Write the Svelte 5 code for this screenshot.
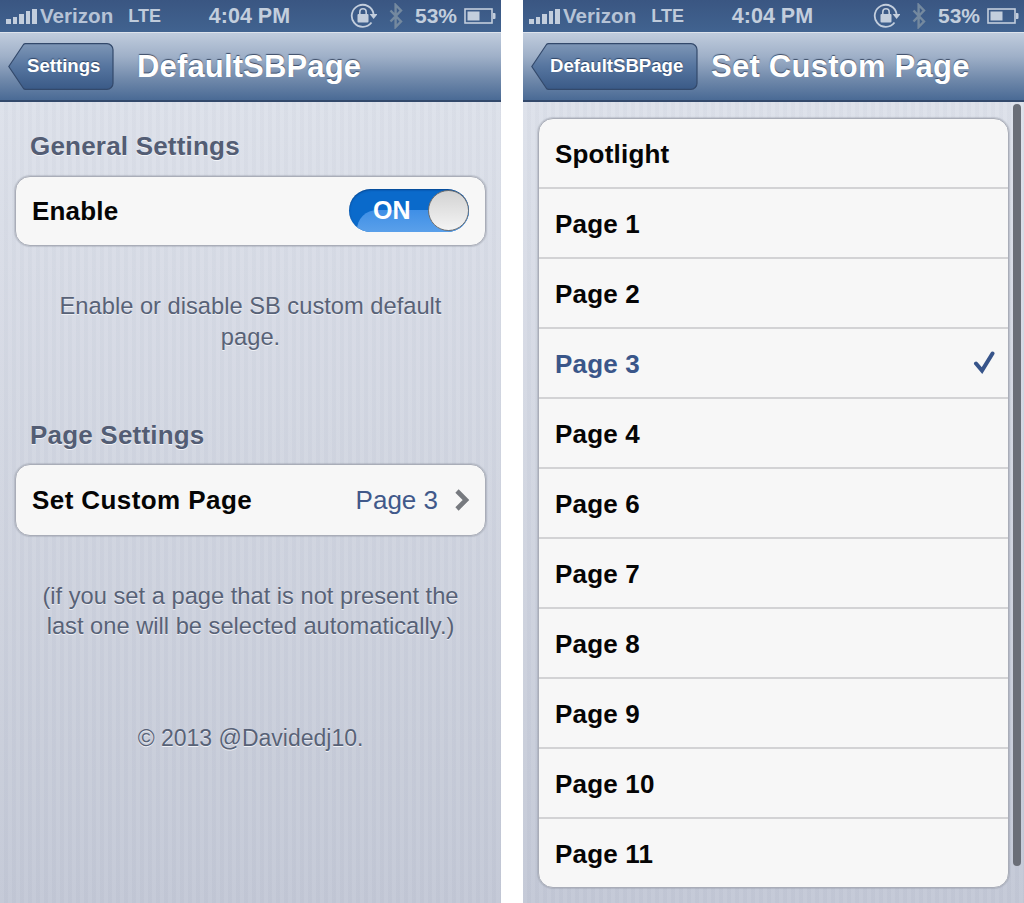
<script lang="ts">
	const pages = ['Spotlight', 'Page 1', 'Page 2', 'Page 3', 'Page 4', 'Page 6', 'Page 7', 'Page 8', 'Page 9', 'Page 10', 'Page 11'];
	const selected = 'Page 3';
	const bars = [5, 7, 10, 13, 15];
</script>

{#snippet statusBar()}
	<div class="status">
		<div class="status-left">
			<span class="signal">
				{#each bars as h}
					<i style="height:{h}px"></i>
				{/each}
			</span>
			<span class="carrier">Verizon</span>
			<span class="lte">LTE</span>
		</div>
		<div class="time">4:04 PM</div>
		<div class="status-right">
			<svg class="lock" width="27" height="26" viewBox="0 0 27 26">
				<path d="M21.5 19.5A11 11 0 1 1 23.6 11" fill="none" stroke="#c3cedd" stroke-width="1.8" />
				<path d="M19.6 11h8l-4 5z" fill="#c3cedd" />
				<rect x="7.5" y="11" width="11" height="8.5" rx="1" fill="#c3cedd" />
				<path d="M9.8 11V9a3.2 3.2 0 0 1 6.4 0v2" fill="none" stroke="#c3cedd" stroke-width="1.6" />
			</svg>
			<svg class="bt" width="14" height="26" viewBox="0 0 14 26">
				<path d="M1.5 7.5l10.5 11-5.4 5.5V2l5.4 5.5L1.5 18.5" fill="none" stroke="#74899f" stroke-width="2.4" />
			</svg>
			<span class="pct">53%</span>
			<svg class="battery" width="32" height="16" viewBox="0 0 32 16">
				<rect x="1" y="1" width="27" height="14" fill="none" stroke="#c3cedd" stroke-width="1.6" />
				<rect x="3.5" y="3.5" width="12" height="9" fill="#c3cedd" />
				<path d="M29 5h1.5a1 1 0 0 1 1 1v4a1 1 0 0 1-1 1H29z" fill="#c3cedd" />
			</svg>
		</div>
	</div>
{/snippet}

{#snippet backButton(label: string, w: number)}
	<div class="back" style="width:{w}px">
		<svg width={w} height="47" viewBox="0 0 {w} 47">
			<defs>
				<linearGradient id="back-fill-{w}" x1="0" y1="0" x2="0" y2="1">
					<stop offset="0" stop-color="#7e96b6" />
					<stop offset="0.5" stop-color="#56759f" />
					<stop offset="1" stop-color="#3a5a87" />
				</linearGradient>
			</defs>
			<path
				d="M0.8 23.5L15.5 1.5Q16.2 0.7 17.5 0.7H{w - 7}a6 6 0 0 1 6 6V40.3a6 6 0 0 1-6 6H17.5Q16.2 46.3 15.5 45.5Z"
				fill="url(#back-fill-{w})"
				stroke="#33496b"
				stroke-width="1.2"
			/>
		</svg>
		<span>{label}</span>
	</div>
{/snippet}

<div class="phones">
	<section class="screen">
		{@render statusBar()}
		<header class="nav">
			{@render backButton('Settings', 106)}
			<h1>DefaultSBPage</h1>
		</header>
		<main class="content settings">
			<h2>General Settings</h2>
			<div class="group">
				<div class="cell">
					<span class="label">Enable</span>
					<div class="switch">
						<span class="on">ON</span>
						<span class="knob"></span>
					</div>
				</div>
			</div>
			<p class="note first">Enable or disable SB custom default page.</p>
			<h2 class="page-head">Page Settings</h2>
			<div class="group">
				<div class="cell tall">
					<span class="label">Set Custom Page</span>
					<span class="value">Page 3</span>
					<svg class="chev" width="16" height="22" viewBox="0 0 16 22">
						<path d="M3 2l9 9-9 9" fill="none" stroke="#777a7f" stroke-width="4.6" />
					</svg>
				</div>
			</div>
			<p class="note second">(if you set a page that is not present the last one will be selected automatically.)</p>
			<p class="note copy">© 2013 @Davidedj10.</p>
		</main>
	</section>

	<section class="screen">
		{@render statusBar()}
		<header class="nav">
			{@render backButton('DefaultSBPage', 167)}
			<h1 class="title-right">Set Custom Page</h1>
		</header>
		<main class="content list">
			<div class="group">
				{#each pages as page}
					<div class="cell row" class:selected={page === selected}>
						<span class="label">{page}</span>
						{#if page === selected}
							<svg class="check" width="22" height="24" viewBox="0 0 22 24">
								<path d="M3 12.5l6 7L19.5 2.5" fill="none" stroke="#37548a" stroke-width="4" stroke-linecap="round" />
							</svg>
						{/if}
					</div>
				{/each}
			</div>
			<div class="scrollbar"></div>
		</main>
	</section>
</div>

<style>
	:global(body) {
		background: #fff;
	}

	.phones {
		display: flex;
		gap: 22px;
		width: 1024px;
		height: 903px;
		overflow: hidden;
		font-family: 'Liberation Sans', Arial, sans-serif;
	}

	.screen {
		display: flex;
		flex-direction: column;
		width: 501px;
		height: 903px;
	}

	.status {
		display: grid;
		grid-template-columns: 1fr auto 1fr;
		align-items: center;
		height: 32px;
		padding: 0 5px 0 6px;
		box-sizing: border-box;
		background: linear-gradient(#3a5682, #416390);
		color: #bfcbdb;
		font-size: 21.5px;
		font-weight: bold;
	}

	.status-left {
		display: flex;
		align-items: center;
	}

	.signal {
		display: flex;
		align-items: flex-end;
		gap: 2px;
		width: 31px;
		height: 15px;
		margin-top: 1px;
	}

	.signal i {
		display: block;
		width: 4.6px;
		background: #c3cedd;
	}

	.carrier {
		margin-left: 3px;
		font-size: 20.6px;
		color: #b6c3d6;
	}

	.lte {
		margin-left: 15px;
		font-size: 18px;
	}

	.time {
		padding-right: 3px;
		color: #c3cedd;
	}

	.status-right {
		display: flex;
		align-items: center;
		justify-content: flex-end;
	}

	.bt {
		margin-left: 12px;
	}

	.pct {
		margin-left: 12px;
		font-size: 21px;
		color: #c3cedd;
	}

	.battery {
		margin-left: 7px;
	}

	.nav {
		display: flex;
		align-items: center;
		gap: 23px;
		height: 70px;
		padding: 0 0 0 8px;
		box-sizing: border-box;
		background: linear-gradient(#c0ccdd, #9fb0c8 35%, #6f88aa 70%, #4a6a95);
		border-top: 1px solid #dde3ec;
		border-bottom: 2px solid #33496b;
	}

	.nav h1 {
		margin: 0;
		font-size: 31px;
		letter-spacing: 0.15px;
		font-weight: bold;
		color: #fff;
		text-shadow: 0 -1px 1px #3d4c66;
	}

	.nav h1.title-right {
		margin-left: -10px;
		letter-spacing: 0.25px;
	}

	.back {
		position: relative;
		flex: none;
		height: 47px;
	}

	.back svg {
		position: absolute;
		inset: 0;
		display: block;
	}

	.back span {
		position: absolute;
		left: 19px;
		top: 0;
		line-height: 46px;
		font-size: 18.6px;
		font-weight: bold;
		color: #fff;
		text-shadow: 0 -1px 1px #2f4568;
	}

	.content {
		position: relative;
		flex: 1;
		box-sizing: border-box;
		background:
			repeating-linear-gradient(90deg, rgba(255, 255, 255, 0.04) 0 4px, rgba(110, 120, 145, 0.03) 4px 8px),
			linear-gradient(#dde1ea, #c3c8d6);
	}

	.settings {
		padding: 28px 15px 0;
	}

	.list {
		padding: 16px 15px 0;
	}

	h2 {
		margin: 0 0 14px 15px;
		height: 32px;
		line-height: 32px;
		font-size: 26px;
		letter-spacing: 0.2px;
		font-weight: bold;
		color: #535d74;
		text-shadow: 0 1px 0 #f2f4f8;
	}

	.group {
		background: #f7f7f7;
		border: 1px solid #a9adb8;
		border-radius: 15px;
		box-shadow: 0 0 1px 1px rgba(130, 135, 150, 0.3);
		overflow: hidden;
	}

	.cell {
		display: flex;
		align-items: center;
		height: 68px;
		padding: 0 16px;
		box-sizing: border-box;
	}

	.cell.tall {
		height: 70px;
	}

	.row {
		height: 70px;
		padding: 2px 16px 0;
		border-bottom: 2px solid #d3d3d5;
	}

	.row:last-child {
		height: 68px;
		border-bottom: none;
	}

	.label {
		flex: 1;
		font-size: 26px;
		letter-spacing: 0.2px;
		font-weight: bold;
		color: #050505;
	}

	.tall .label {
		letter-spacing: 0.42px;
	}

	.selected .label {
		color: #3a5689;
	}

	.check {
		margin: -2px -3px 0 0;
	}

	.value {
		font-size: 26px;
		color: #41598a;
	}

	.chev {
		margin: 0 -1px 0 16px;
	}

	.switch {
		position: relative;
		width: 120px;
		height: 43px;
		margin-top: -2px;
		border-radius: 22px;
		overflow: hidden;
		background: #0a6acb;
		box-shadow: inset 0 1px 2px rgba(0, 30, 80, 0.5);
	}

	.switch::before {
		content: '';
		position: absolute;
		left: 8px;
		right: 0;
		top: 21px;
		bottom: 0;
		border-top-left-radius: 20px;
		background: linear-gradient(#3f8fe6, #5aa0ea);
	}

	.on {
		position: absolute;
		left: 24px;
		top: 0;
		line-height: 43px;
		font-size: 25px;
		font-weight: bold;
		color: #fff;
	}

	.knob {
		position: absolute;
		right: 0;
		top: 1px;
		width: 39px;
		height: 39px;
		border: 1px solid #6f6f6f;
		border-radius: 50%;
		background: linear-gradient(#d2d2d2, #f4f4f4);
	}

	.note {
		margin: 0;
		padding: 0 20px;
		text-align: center;
		font-size: 23.7px;
		line-height: 31px;
		color: #586277;
		text-shadow: 0 1px 0 #eef0f5;
	}

	.note.first {
		padding: 0 30px;
		margin-top: 45px;
	}

	.page-head {
		margin-top: 66px;
		margin-bottom: 13px;
	}

	.note.second {
		margin-top: 45px;
		line-height: 30px;
	}

	.note.copy {
		margin-top: 82px;
		font-size: 23px;
	}

	.scrollbar {
		position: absolute;
		right: 3px;
		top: 2px;
		bottom: 37px;
		width: 8px;
		border-radius: 4px;
		background: #6a6e77;
	}
</style>
